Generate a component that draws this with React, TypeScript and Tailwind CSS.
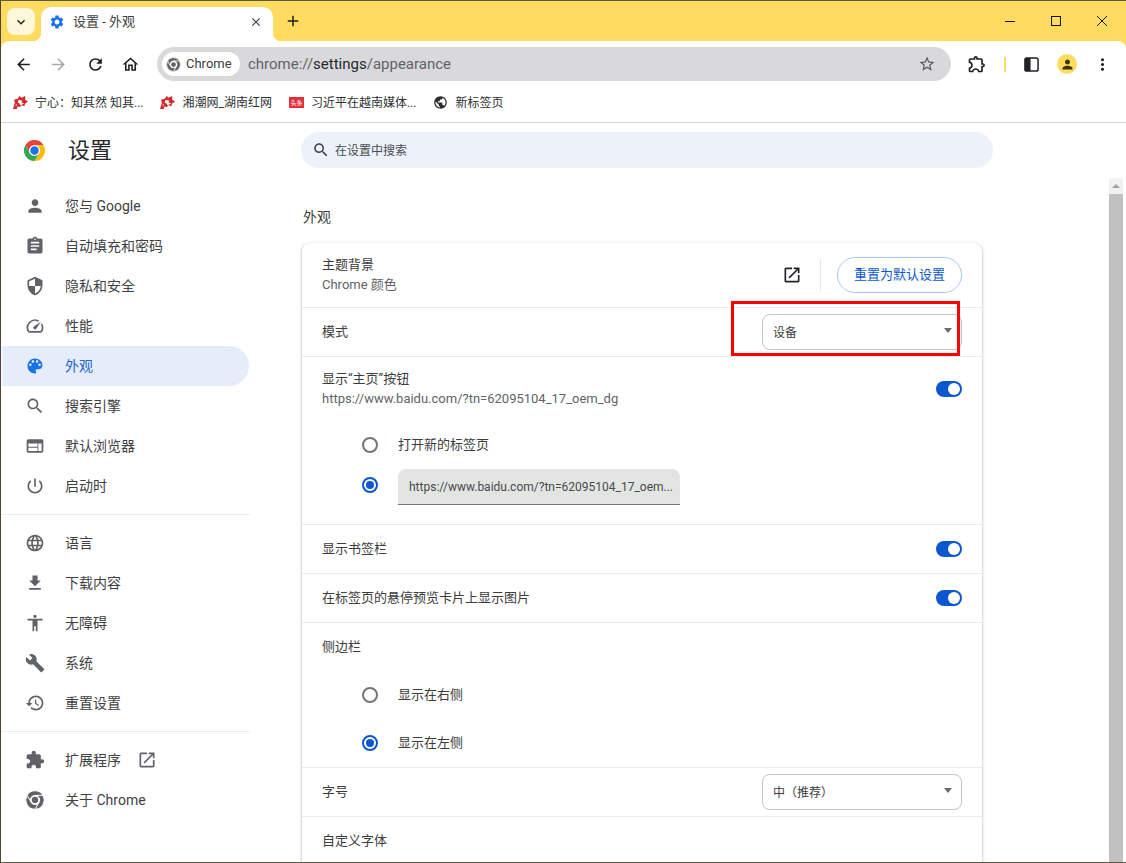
import type { ReactNode } from 'react';

const ICONS = {
  person: 'M12 12c2.21 0 4-1.79 4-4s-1.79-4-4-4-4 1.79-4 4 1.79 4 4 4zm0 2c-2.67 0-8 1.34-8 4v2h16v-2c0-2.66-5.33-4-8-4z',
  assignment: 'M19 3h-4.18C14.4 1.84 13.3 1 12 1c-1.3 0-2.4.84-2.82 2H5c-1.1 0-2 .9-2 2v14c0 1.1.9 2 2 2h14c1.1 0 2-.9 2-2V5c0-1.1-.9-2-2-2zm-7 0c.55 0 1 .45 1 1s-.45 1-1 1-1-.45-1-1 .45-1 1-1zm2 14H7v-2h7v2zm3-4H7v-2h10v2zm0-4H7V7h10v2z',
  security: 'M12 1L3 5v6c0 5.55 3.84 10.74 9 12 5.16-1.26 9-6.45 9-12V5l-9-4zm0 10.99h7c-.53 4.12-3.28 7.79-7 8.94V12H5V6.3l7-3.11v8.8z',
  speed: 'M20.38 8.57l-1.23 1.85a8 8 0 0 1-.22 7.58H5.07A8 8 0 0 1 15.58 6.85l1.85-1.23A10 10 0 0 0 3.35 19a2 2 0 0 0 1.72 1h13.85a2 2 0 0 0 1.74-1 10 10 0 0 0-.27-10.44zm-9.79 6.84a2 2 0 0 0 2.83 0l5.66-8.49-8.49 5.66a2 2 0 0 0 0 2.83z',
  palette: 'M12 3c-4.97 0-9 4.03-9 9s4.03 9 9 9c.83 0 1.5-.67 1.5-1.5 0-.39-.15-.74-.39-1.01-.23-.26-.38-.61-.38-.99 0-.83.67-1.5 1.5-1.5H16c2.76 0 5-2.24 5-5 0-4.42-4.03-8-9-8zm-5.5 9c-.83 0-1.5-.67-1.5-1.5S5.67 9 6.5 9 8 9.67 8 10.5 7.33 12 6.5 12zm3-4C8.67 8 8 7.33 8 6.5S8.67 5 9.5 5s1.5.67 1.5 1.5S10.33 8 9.5 8zm5 0c-.83 0-1.5-.67-1.5-1.5S13.67 5 14.5 5s1.5.67 1.5 1.5S15.33 8 14.5 8zm3 4c-.83 0-1.5-.67-1.5-1.5S16.67 9 17.5 9s1.5.67 1.5 1.5-.67 1.5-1.5 1.5z',
  search: 'M15.5 14h-.79l-.28-.27C15.41 12.59 16 11.11 16 9.5 16 5.91 13.09 3 9.5 3S3 5.91 3 9.5 5.91 16 9.5 16c1.61 0 3.09-.59 4.23-1.57l.27.28v.79l5 4.99L20.49 19l-4.99-5zm-6 0C7.01 14 5 11.99 5 9.5S7.01 5 9.5 5 14 7.01 14 9.5 11.99 14 9.5 14z',
  web: 'M20 4H4c-1.1 0-1.99.9-1.99 2L2 18c0 1.1.9 2 2 2h16c1.1 0 2-.9 2-2V6c0-1.1-.9-2-2-2zm-5 14H4v-4h11v4zm0-5H4V9h11v4zm5 5h-4V9h4v9z',
  power: 'M13 3h-2v10h2V3zm4.83 2.17l-1.42 1.42C17.99 7.86 19 9.81 19 12c0 3.87-3.13 7-7 7s-7-3.13-7-7c0-2.19 1.01-4.14 2.58-5.42L6.17 5.17C4.23 6.82 3 9.26 3 12c0 4.97 4.03 9 9 9s9-4.03 9-9c0-2.74-1.23-5.18-3.17-6.83z',
  language: 'M11.99 2C6.47 2 2 6.48 2 12s4.47 10 9.99 10C17.52 22 22 17.52 22 12S17.52 2 11.99 2zm6.93 6h-2.95c-.32-1.25-.78-2.45-1.38-3.56 1.84.63 3.37 1.91 4.33 3.56zM12 4.04c.83 1.2 1.48 2.53 1.91 3.96h-3.82c.43-1.43 1.08-2.76 1.91-3.96zM4.26 14C4.1 13.36 4 12.69 4 12s.1-1.36.26-2h3.38c-.08.66-.14 1.32-.14 2 0 .68.06 1.34.14 2H4.26zm.82 2h2.95c.32 1.25.78 2.45 1.38 3.56-1.84-.63-3.37-1.9-4.33-3.56zm2.95-8H5.08c.96-1.66 2.49-2.93 4.33-3.56C8.81 5.55 8.35 6.75 8.03 8zM12 19.96c-.83-1.2-1.48-2.53-1.91-3.96h3.82c-.43 1.43-1.08 2.76-1.91 3.96zM14.34 14H9.66c-.09-.66-.16-1.32-.16-2 0-.68.07-1.35.16-2h4.68c.09.65.16 1.32.16 2 0 .68-.07 1.34-.16 2zm.25 5.56c.6-1.11 1.06-2.31 1.38-3.56h2.95c-.96 1.65-2.49 2.93-4.33 3.56zM16.36 14c.08-.66.14-1.32.14-2 0-.68-.06-1.34-.14-2h3.38c.16.64.26 1.31.26 2s-.1 1.36-.26 2h-3.38z',
  download: 'M19 9h-4V3H9v6H5l7 7 7-7zM5 18v2h14v-2H5z',
  accessibility: 'M12 2c1.1 0 2 .9 2 2s-.9 2-2 2-2-.9-2-2 .9-2 2-2zm9 7h-6v13h-2v-6h-2v6H9V9H3V7h18v2z',
  build: 'M22.7 19l-9.1-9.1c.9-2.3.4-5-1.5-6.9-2-2-5-2.4-7.4-1.3L9 6 6 9 1.6 4.7C.4 7.1.9 10.1 2.9 12.1c1.9 1.9 4.6 2.4 6.9 1.5l9.1 9.1c.4.4 1 .4 1.4 0l2.3-2.3c.5-.4.5-1.1.1-1.4z',
  restore: 'M13 3c-4.97 0-9 4.03-9 9H1l3.89 3.89.07.14L9 12H6c0-3.87 3.13-7 7-7s7 3.13 7 7-3.13 7-7 7c-1.93 0-3.68-.79-4.94-2.06l-1.42 1.42C8.27 19.99 10.51 21 13 21c4.97 0 9-4.03 9-9s-4.03-9-9-9zm-1 5v5l4.28 2.54.72-1.21-3.5-2.08V8H12z',
  extension: 'M20.5 11H19V7c0-1.1-.9-2-2-2h-4V3.5C13 2.12 11.88 1 10.5 1S8 2.12 8 3.5V5H4c-1.1 0-1.99.9-1.99 2v3.8H3.5c1.49 0 2.7 1.21 2.7 2.7s-1.21 2.7-2.7 2.7H2V20c0 1.1.9 2 2 2h3.8v-1.5c0-1.49 1.21-2.7 2.7-2.7 1.49 0 2.7 1.21 2.7 2.7V22H17c1.1 0 2-.9 2-2v-4h1.5c1.38 0 2.5-1.12 2.5-2.5S21.88 11 20.5 11z',
  extensionOutline: 'M10.5 4.5c.28 0 .5.22.5.5v2h6v6h2c.28 0 .5.22.5.5s-.22.5-.5.5h-2v6h-2.12c-.68-1.75-2.39-3-4.38-3s-3.7 1.25-4.38 3H4v-2.12c1.75-.68 3-2.39 3-4.38 0-1.99-1.24-3.7-2.99-4.38L4 7h6V5c0-.28.22-.5.5-.5m0-2C9.12 2.5 8 3.62 8 5H4c-1.1 0-1.99.9-1.99 2v3.8h.29c1.49 0 2.7 1.21 2.7 2.7s-1.21 2.7-2.7 2.7H2V20c0 1.1.9 2 2 2h3.8v-.3c0-1.49 1.21-2.7 2.7-2.7s2.7 1.21 2.7 2.7v.3H17c1.1 0 2-.9 2-2v-4c1.38 0 2.5-1.12 2.5-2.5S20.38 11 19 11V7c0-1.1-.9-2-2-2h-4c0-1.38-1.12-2.5-2.5-2.5z',
  open: 'M19 19H5V5h7V3H5c-1.11 0-2 .9-2 2v14c0 1.1.89 2 2 2h14c1.1 0 2-.9 2-2v-7h-2v7zM14 3v2h3.59l-9.83 9.83 1.41 1.41L19 6.41V10h2V3h-7z',
  settings: 'M19.14 12.94c.04-.3.06-.61.06-.94 0-.32-.02-.64-.07-.94l2.03-1.58c.18-.14.23-.41.12-.61l-1.92-3.32c-.12-.22-.37-.29-.59-.22l-2.39.96c-.5-.38-1.03-.7-1.62-.94l-.36-2.54c-.04-.24-.24-.41-.48-.41h-3.84c-.24 0-.43.17-.47.41l-.36 2.54c-.59.24-1.13.57-1.62.94l-2.39-.96c-.22-.08-.47 0-.59.22L2.74 8.87c-.12.21-.08.47.12.61l2.03 1.58c-.05.3-.09.63-.09.94s.02.64.07.94l-2.03 1.58c-.18.14-.23.41-.12.61l1.92 3.32c.12.22.37.29.59.22l2.39-.96c.5.38 1.03.7 1.62.94l.36 2.54c.05.24.24.41.48.41h3.84c.24 0 .44-.17.47-.41l.36-2.54c.59-.24 1.13-.56 1.62-.94l2.39.96c.22.08.47 0 .59-.22l1.92-3.32c.12-.22.07-.47-.12-.61l-2.01-1.58zM12 15.6c-1.98 0-3.6-1.62-3.6-3.6s1.62-3.6 3.6-3.6 3.6 1.62 3.6 3.6-1.62 3.6-3.6 3.6z',
  star: 'M22 9.24l-7.19-.62L12 2 9.19 8.63 2 9.24l5.46 4.73L5.82 21 12 17.27 18.18 21l-1.63-7.03L22 9.24zM12 15.4l-3.76 2.27 1-4.28-3.32-2.88 4.38-.38L12 6.1l1.71 4.04 4.38.38-3.32 2.88 1 4.28L12 15.4z',
  home: 'M12 5.69l5 4.5V18h-2v-6H9v6H7v-7.81l5-4.5M12 3L2 12h3v8h6v-6h2v6h6v-8h3L12 3z',
  back: 'M20 11H7.83l5.59-5.59L12 4l-8 8 8 8 1.41-1.41L7.83 13H20v-2z',
  forward: 'M12 4l-1.41 1.41L16.17 11H4v2h12.17l-5.58 5.59L12 20l8-8z',
  reload: 'M17.65 6.35C16.2 4.9 14.21 4 12 4c-4.42 0-7.99 3.58-7.99 8s3.57 8 7.99 8c3.73 0 6.84-2.55 7.73-6h-2.08c-.82 2.33-3.04 4-5.65 4-3.31 0-6-2.69-6-6s2.69-6 6-6c1.66 0 3.14.69 4.22 1.78L13 11h7V4l-2.35 2.35z',
  menu: 'M12 8c1.1 0 2-.9 2-2s-.9-2-2-2-2 .9-2 2 .9 2 2 2zm0 2c-1.1 0-2 .9-2 2s.9 2 2 2 2-.9 2-2-.9-2-2-2zm0 6c-1.1 0-2 .9-2 2s.9 2 2 2 2-.9 2-2-.9-2-2-2z',
  plus: 'M19 13h-6v6h-2v-6H5v-2h6V5h2v6h6v2z',
  close: 'M19 6.41L17.59 5 12 10.59 6.41 5 5 6.41 10.59 12 5 17.59 6.41 19 12 13.41 17.59 19 19 17.59 13.41 12z',
  chevron: 'M7.41 8.59L12 13.17l4.59-4.58L18 10l-6 6-6-6z',
  globe: 'M12 2C6.48 2 2 6.48 2 12s4.48 10 10 10 10-4.48 10-10S17.52 2 12 2zm-1 17.93c-3.95-.49-7-3.85-7-7.93 0-.62.08-1.21.21-1.79L9 15v1c0 1.1.9 2 2 2v1.93zm6.9-2.54c-.26-.81-1-1.39-1.9-1.39h-1v-3c0-.55-.45-1-1-1H8v-2h2c.55 0 1-.45 1-1V7h2c1.1 0 2-.9 2-2v-.41c2.93 1.19 5 4.06 5 7.41 0 2.08-.8 3.97-2.1 5.39z',
};

type IconName = keyof typeof ICONS;

const Icon = ({ name, className }: { name: IconName; className: string }) => (
  <svg viewBox="0 0 24 24" fill="currentColor" className={className}>
    <path d={ICONS[name]} />
  </svg>
);

const ChromeLogo = ({ className, mono }: { className: string; mono?: boolean }) => {
  const sep = mono ? { stroke: '#fff', strokeWidth: 1 } : {};
  return (
    <svg viewBox="0 0 24 24" className={className}>
      <path fill={mono ? '#5f6368' : '#ea4335'} {...sep} d="M21.53 6.5H12A5.5 5.5 0 0 0 7.24 14.75L2.47 6.5A11 11 0 0 1 21.53 6.5z" />
      <path fill={mono ? '#5f6368' : '#fbbc04'} {...sep} d="M12 23A11 11 0 0 0 21.53 6.5H12A5.5 5.5 0 0 1 16.76 14.75z" />
      <path fill={mono ? '#5f6368' : '#34a853'} {...sep} d="M2.47 6.5A11 11 0 0 0 12 23l4.76-8.25A5.5 5.5 0 0 1 7.24 14.75z" />
      <circle cx="12" cy="12" r="5.5" fill="#fff" />
      <circle cx="12" cy="12" r={mono ? 3.8 : 4.4} fill={mono ? '#5f6368' : '#1a73e8'} />
    </svg>
  );
};

// red favicon used by two of the bookmarks
const RedFavicon = () => (
  <svg viewBox="0 0 16 16" className="h-[15px] w-[15px] shrink-0">
    <path fill="#d7282a" d="M0 15L2 8 1 5l4-1 2-3 2 2 4-2 0 4 3 2-3 2-1 3-3-1-2 2-2-1-1 3z" />
    <path fill="#fff" d="M6 5l4 1-1 2 3 1-4 2-1-2-2-1zM3 9l1 1-1 3z" />
  </svg>
);

const NAV_TOP: { icon: IconName; label: string; active?: boolean }[] = [
  { icon: 'person', label: '您与 Google' },
  { icon: 'assignment', label: '自动填充和密码' },
  { icon: 'security', label: '隐私和安全' },
  { icon: 'speed', label: '性能' },
  { icon: 'palette', label: '外观', active: true },
  { icon: 'search', label: '搜索引擎' },
  { icon: 'web', label: '默认浏览器' },
  { icon: 'power', label: '启动时' },
];

const NAV_MID: { icon: IconName; label: string }[] = [
  { icon: 'language', label: '语言' },
  { icon: 'download', label: '下载内容' },
  { icon: 'accessibility', label: '无障碍' },
  { icon: 'build', label: '系统' },
  { icon: 'restore', label: '重置设置' },
];

const NavRow = ({ icon, label, active }: { icon: ReactNode; label: ReactNode; active?: boolean }) => (
  <div
    className={
      active
        ? 'flex h-10 w-[247px] items-center gap-5 rounded-r-full bg-[#e5edfb] pl-[23px] text-sm text-[#1a66d6]'
        : 'flex h-10 w-[247px] items-center gap-5 pl-[23px] text-sm text-[#3f4144]'
    }
  >
    {icon}
    {label}
  </div>
);

const Toggle = () => (
  <div className="flex h-4 w-[26px] items-center justify-end rounded-full bg-[#0b57d0] pr-[2px]">
    <div className="h-3 w-3 rounded-full bg-white" />
  </div>
);

const Radio = ({ checked }: { checked?: boolean }) => (
  <div
    className={
      checked
        ? 'flex h-4 w-4 items-center justify-center rounded-full border-2 border-[#0b57d0]'
        : 'h-4 w-4 rounded-full border-2 border-[#757575]'
    }
  >
    {checked && <div className="h-2 w-2 rounded-full bg-[#0b57d0]" />}
  </div>
);

const Select = ({ value }: { value: string }) => (
  <div className="flex h-9 w-[200px] items-center justify-between rounded-lg border border-[#c4c4c4] pl-[10px] pr-[9px] text-xs text-[#3c3c3c]">
    <span className="pt-[2px]">{value}</span>
    <div className="mb-[3px] h-0 w-0 border-x-[4px] border-t-[5px] border-x-transparent border-t-[#6b6b6b]" />
  </div>
);

const Row = ({ label, children }: { label: string; children?: ReactNode }) => (
  <div className="flex h-[49px] items-center justify-between border-t border-[#ebebeb] pl-5 pr-5 text-[13px] text-[#3c3c3c]">
    <span>{label}</span>
    {children}
  </div>
);

const RadioRow = ({ label, checked }: { label: string; checked?: boolean }) => (
  <div className="flex h-12 items-center gap-5 pl-[60px] text-[13px] text-[#3c3c3c]">
    <Radio checked={checked} />
    <span>{label}</span>
  </div>
);

const Bookmark = ({ icon, label, gap }: { icon: ReactNode; label: string; gap: string }) => (
  <div className={`flex items-center gap-[7px] ${gap}`}>
    {icon}
    <span>{label}</span>
  </div>
);

export default function App() {
  return (
    <div
      className="relative h-[863px] w-[1126px] overflow-hidden border-y border-l border-y-[#5d5a4c] border-l-[#4e443a] bg-[#ffdc5f]"
      style={{ fontFamily: 'Roboto, "Noto Sans CJK SC", sans-serif' }}
    >
      {/* Tab strip */}
      <div className="flex h-10 items-end">
        <div className="mb-[6px] ml-[6px] flex h-[27px] w-[28px] items-center justify-center rounded-lg bg-[#fff7dc] text-[#1f1f1f]">
          <Icon name="chevron" className="h-4 w-4" />
        </div>
        <div className="relative ml-[6px] flex h-[34px] w-[232px] items-center rounded-t-[10px] bg-white pb-1 pl-2 pr-[10px] text-[13px] text-[#3c4043]">
          <Icon name="settings" className="h-4 w-4 text-[#1a73e8]" />
          <span className="ml-2 flex-1">设置 - 外观</span>
          <Icon name="close" className="h-[14px] w-[14px] text-[#3c4043]" />
          <div className="absolute bottom-0 left-[-8px] h-2 w-2 bg-[radial-gradient(circle_at_0_0,transparent_8px,white_8px)]" />
          <div className="absolute bottom-0 right-[-8px] h-2 w-2 bg-[radial-gradient(circle_at_100%_0,transparent_8px,white_8px)]" />
        </div>
        <Icon name="plus" className="mb-[11px] ml-[11px] h-[18px] w-[18px] text-[#1f1f1f]" />
        <div className="mb-[15px] ml-auto flex items-center text-[#111]">
          <div className="flex w-[46px] justify-center">
            <div className="h-px w-[10px] bg-[#111]" />
          </div>
          <div className="flex w-[46px] justify-center">
            <div className="h-[10px] w-[10px] border border-[#111]" />
          </div>
          <div className="flex w-[46px] justify-center">
            <svg viewBox="0 0 10 10" className="h-[10px] w-[10px]" stroke="#111" strokeWidth="1">
              <path d="M0 0l10 10M10 0L0 10" />
            </svg>
          </div>
          <div className="w-[1px]" />
        </div>
      </div>

      {/* Toolbar */}
      <div className="flex h-[46px] items-center rounded-t-lg bg-white text-[#1f1f1f]">
        <Icon name="back" className="ml-[13px] h-[19px] w-[19px]" />
        <Icon name="forward" className="ml-[16px] h-[19px] w-[19px] text-[#a9a9a9]" />
        <Icon name="reload" className="ml-[18px] h-[19px] w-[19px]" />
        <Icon name="home" className="ml-[16px] h-[19px] w-[19px]" />
        <div className="ml-[17px] flex h-[34px] w-[794px] items-center rounded-full bg-[#d9d9db] pl-[5px] pr-[15px]">
          <div className="flex h-6 w-[78px] items-center rounded-full bg-white pl-[4px] text-[13px] text-[#3c4043]">
            <ChromeLogo mono className="h-[15px] w-[15px]" />
            <span className="ml-[5px]">Chrome</span>
          </div>
          <div className="ml-2 flex-1 text-[15px] text-[#5f6368]">
            chrome://<span className="text-[#26282b]">settings</span>/appearance
          </div>
          <Icon name="star" className="h-[18px] w-[18px] text-[#55585c]" />
        </div>
        <Icon name="extensionOutline" className="ml-[16px] h-5 w-5 text-[#1f2327]" />
        <div className="ml-[17px] h-[15px] w-[2px] bg-[#ffdc5f]" />
        <svg viewBox="0 0 16 16" className="ml-[18px] h-[15px] w-[15px]">
          <rect x="1" y="1" width="14" height="14" rx="2" fill="none" stroke="#1f2327" strokeWidth="1.6" />
          <rect x="1" y="1" width="6" height="14" fill="#1f2327" />
        </svg>
        <div className="ml-[18px] flex h-5 w-5 items-center justify-center rounded-full bg-[#ffdc5f]">
          <Icon name="person" className="h-[15px] w-[15px] text-[#3d3200]" />
        </div>
        <Icon name="menu" className="ml-[16px] h-[19px] w-[19px]" />
      </div>

      {/* Bookmarks bar */}
      <div className="flex h-9 items-center border-b border-[#d2d2d2] bg-white pb-1 pl-3 text-xs text-[#2f3133]">
        <Bookmark icon={<RedFavicon />} label="宁心：知其然 知其..." gap="" />
        <Bookmark icon={<RedFavicon />} label="湘潮网_湖南红网" gap="ml-[17px]" />
        <Bookmark
          icon={
            <div className="flex h-[11px] w-[15px] items-center justify-center overflow-hidden bg-[#e5303b] text-[6px] leading-none text-white">
              头条
            </div>
          }
          label="习近平在越南媒体..."
          gap="ml-[17px]"
        />
        <Bookmark icon={<Icon name="globe" className="h-[15px] w-[15px] text-[#2a2c2e]" />} label="新标签页" gap="ml-[17px]" />
      </div>

      {/* Page */}
      <div className="flex h-[739px] bg-white">
        {/* Sidebar */}
        <div className="w-[300px] shrink-0 pl-px">
          <div className="flex h-[63px] items-center pb-[9px] pl-[21px]">
            <ChromeLogo className="h-[23px] w-[23px]" />
            <span className="ml-[22px] text-[22px] text-[#26282b]">设置</span>
          </div>
          {NAV_TOP.map((item) => (
            <NavRow
              key={item.label}
              active={item.active}
              icon={<Icon name={item.icon} className={item.active ? 'h-5 w-5 text-[#1a73e8]' : 'h-5 w-5 text-[#5f6368]'} />}
              label={item.label}
            />
          ))}
          <div className="my-2 ml-[-2px] h-px w-[250px] bg-[#ececec]" />
          {NAV_MID.map((item) => (
            <NavRow
              key={item.label}
              icon={<Icon name={item.icon} className="h-5 w-5 text-[#5f6368]" />}
              label={item.label}
            />
          ))}
          <div className="my-2 ml-[-2px] h-px w-[250px] bg-[#ececec]" />
          <NavRow
            icon={<Icon name="extension" className="h-5 w-5 text-[#5f6368]" />}
            label={
              <div className="flex items-center gap-4">
                扩展程序
                <Icon name="open" className="h-5 w-5 text-[#5f6368]" />
              </div>
            }
          />
          <NavRow icon={<ChromeLogo mono className="h-5 w-5" />} label="关于 Chrome" />
        </div>

        {/* Main column */}
        <div className="flex-1 pt-[9px]">
          <div className="flex h-9 w-[692px] items-center gap-[5px] rounded-full bg-[#edf2fa] pl-[11px] text-xs text-[#4a4d50]">
            <Icon name="search" className="h-[18px] w-[18px] text-[#3c4043]" />
            <span className="pt-[2px]">在设置中搜索</span>
          </div>
          <div className="ml-[2px] mt-[39px] text-sm leading-5 text-[#3c3c3c]">外观</div>
          <div className="ml-px mt-4 w-[680px] rounded-t-lg bg-white shadow-[0_1px_2px_rgba(60,64,67,0.3),0_1px_3px_1px_rgba(60,64,67,0.15)]">
            <div className="flex h-16 items-center justify-between pl-5 pr-5 text-[13px] leading-5">
              <div>
                <div className="text-[#3c3c3c]">主题背景</div>
                <div className="text-[#5f6368]">Chrome 颜色</div>
              </div>
              <div className="flex items-center">
                <Icon name="open" className="h-5 w-5 text-[#1f2327]" />
                <div className="ml-[18px] mr-4 h-8 w-px bg-[#e6e6e6]" />
                <div className="flex h-9 w-[125px] items-center justify-center rounded-full border border-[#a8c7fa] text-[13px] text-[#0b57d0]">
                  重置为默认设置
                </div>
              </div>
            </div>
            <Row label="模式">
              <Select value="设备" />
            </Row>
            <div className="border-t border-[#ebebeb]">
              <div className="flex h-16 items-center justify-between pl-5 pr-5 text-[13px] leading-5">
                <div>
                  <div className="text-[#3c3c3c]">显示“主页”按钮</div>
                  <div className="text-[#5f6368]">https://www.baidu.com/?tn=62095104_17_oem_dg</div>
                </div>
                <Toggle />
              </div>
              <RadioRow label="打开新的标签页" />
              <div className="flex h-[55px] items-start gap-5 pl-[60px]">
                <div className="mt-2">
                  <Radio checked />
                </div>
                <div className="flex h-9 w-[282px] items-center whitespace-nowrap rounded-t-lg border-b border-[#757575] bg-[#e3e5e3] pl-[11px] text-xs text-[#474a4d]">
                  https://www.baidu.com/?tn=62095104_17_oem...
                </div>
              </div>
            </div>
            <Row label="显示书签栏">
              <Toggle />
            </Row>
            <Row label="在标签页的悬停预览卡片上显示图片">
              <Toggle />
            </Row>
            <Row label="侧边栏" />
            <RadioRow label="显示在右侧" />
            <RadioRow label="显示在左侧" checked />
            <Row label="字号">
              <Select value="中（推荐）" />
            </Row>
            <Row label="自定义字体" />
          </div>
        </div>

        {/* Scrollbar */}
        <div className="mr-[3px] mt-[55px] flex w-[14px] shrink-0 flex-col">
          <div className="flex h-4 items-center justify-center bg-[#f1f1f1]">
            <div className="h-0 w-0 border-x-[4px] border-b-[4px] border-x-transparent border-b-[#a3a3a3]" />
          </div>
          <div className="flex-1 bg-[#c1c1c1]" />
        </div>
      </div>

      {/* Red highlight around the mode dropdown */}
      <div className="absolute left-[730px] top-[300px] h-[55px] w-[229px] border-[3px] border-[#ff0000]" />
    </div>
  );
}
